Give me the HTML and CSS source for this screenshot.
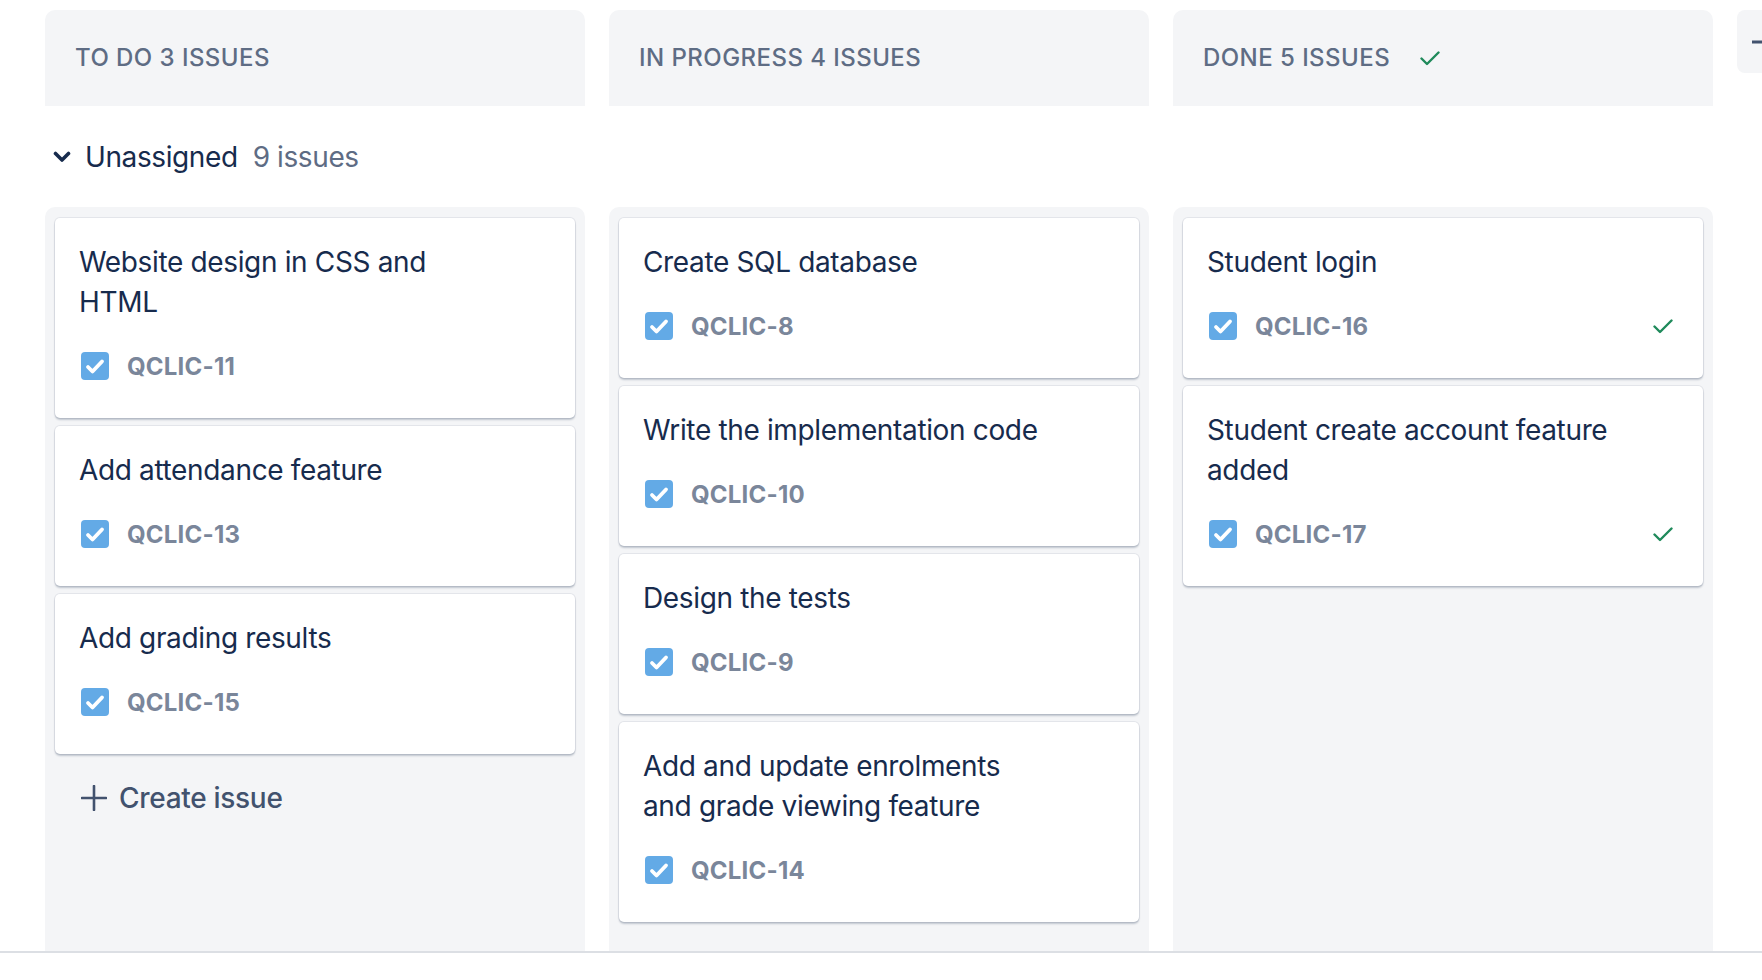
FILE: index.html
```html
<!DOCTYPE html>
<html lang="en">
<head>
<meta charset="utf-8">
<title>Board</title>
<link rel="stylesheet" href="styles.css">
</head>
<body>
<div class="board">
  <div class="col-head"><span class="col-title">TO DO 3 ISSUES</span></div>
  <div class="col-head"><span class="col-title">IN PROGRESS 4 ISSUES</span></div>
  <div class="col-head"><span class="col-title">DONE 5 ISSUES</span>
    <svg class="done-check head-check" viewBox="0 0 20 15" width="20" height="15"><path d="M1.5 7.5 L7 13 L18.5 1.5" fill="none" stroke="#1f8a5b" stroke-width="2.4" stroke-linecap="round" stroke-linejoin="round"/></svg>
  </div>
  <div class="add-col">
    <svg viewBox="0 0 34 34" width="34" height="34"><path d="M0 17 H34 M17 0 V34" stroke="#42526e" stroke-width="3" stroke-linecap="round"/></svg>
  </div>

  <div class="swimlane">
    <svg class="chev" viewBox="0 0 18 12" width="18" height="12"><path d="M2.5 2.5 L9 9 L15.5 2.5" fill="none" stroke="#172b4d" stroke-width="3.6" stroke-linecap="round" stroke-linejoin="round"/></svg>
    <span class="lane-title">Unassigned</span>
    <span class="lane-count">9 issues</span>
  </div>

  <div class="col-body">
    <div class="card">
      <div class="summary">Website design in CSS and HTML</div>
      <div class="meta">
        <svg class="task" viewBox="0 0 28 28" width="28" height="28"><rect width="28" height="28" rx="4" fill="#63aae6"/><path d="M7 15 L11.5 19.5 L21 9.5" fill="none" stroke="#fff" stroke-width="3.8" stroke-linecap="round" stroke-linejoin="round"/></svg>
        <span class="key">QCLIC-11</span>
      </div>
    </div>
    <div class="card">
      <div class="summary">Add attendance feature</div>
      <div class="meta">
        <svg class="task" viewBox="0 0 28 28" width="28" height="28"><rect width="28" height="28" rx="4" fill="#63aae6"/><path d="M7 15 L11.5 19.5 L21 9.5" fill="none" stroke="#fff" stroke-width="3.8" stroke-linecap="round" stroke-linejoin="round"/></svg>
        <span class="key">QCLIC-13</span>
      </div>
    </div>
    <div class="card">
      <div class="summary">Add grading results</div>
      <div class="meta">
        <svg class="task" viewBox="0 0 28 28" width="28" height="28"><rect width="28" height="28" rx="4" fill="#63aae6"/><path d="M7 15 L11.5 19.5 L21 9.5" fill="none" stroke="#fff" stroke-width="3.8" stroke-linecap="round" stroke-linejoin="round"/></svg>
        <span class="key">QCLIC-15</span>
      </div>
    </div>
    <div class="create">
      <svg viewBox="0 0 26 26" width="26" height="26"><path d="M1 13 H25 M13 1 V25" stroke="#42526e" stroke-width="2.6" stroke-linecap="round"/></svg>
      <span>Create issue</span>
    </div>
  </div>

  <div class="col-body">
    <div class="card">
      <div class="summary">Create SQL database</div>
      <div class="meta">
        <svg class="task" viewBox="0 0 28 28" width="28" height="28"><rect width="28" height="28" rx="4" fill="#63aae6"/><path d="M7 15 L11.5 19.5 L21 9.5" fill="none" stroke="#fff" stroke-width="3.8" stroke-linecap="round" stroke-linejoin="round"/></svg>
        <span class="key">QCLIC-8</span>
      </div>
    </div>
    <div class="card">
      <div class="summary">Write the implementation code</div>
      <div class="meta">
        <svg class="task" viewBox="0 0 28 28" width="28" height="28"><rect width="28" height="28" rx="4" fill="#63aae6"/><path d="M7 15 L11.5 19.5 L21 9.5" fill="none" stroke="#fff" stroke-width="3.8" stroke-linecap="round" stroke-linejoin="round"/></svg>
        <span class="key">QCLIC-10</span>
      </div>
    </div>
    <div class="card">
      <div class="summary">Design the tests</div>
      <div class="meta">
        <svg class="task" viewBox="0 0 28 28" width="28" height="28"><rect width="28" height="28" rx="4" fill="#63aae6"/><path d="M7 15 L11.5 19.5 L21 9.5" fill="none" stroke="#fff" stroke-width="3.8" stroke-linecap="round" stroke-linejoin="round"/></svg>
        <span class="key">QCLIC-9</span>
      </div>
    </div>
    <div class="card">
      <div class="summary">Add and update enrolments and grade viewing feature</div>
      <div class="meta">
        <svg class="task" viewBox="0 0 28 28" width="28" height="28"><rect width="28" height="28" rx="4" fill="#63aae6"/><path d="M7 15 L11.5 19.5 L21 9.5" fill="none" stroke="#fff" stroke-width="3.8" stroke-linecap="round" stroke-linejoin="round"/></svg>
        <span class="key">QCLIC-14</span>
      </div>
    </div>
  </div>

  <div class="col-body">
    <div class="card">
      <div class="summary">Student login</div>
      <div class="meta">
        <svg class="task" viewBox="0 0 28 28" width="28" height="28"><rect width="28" height="28" rx="4" fill="#63aae6"/><path d="M7 15 L11.5 19.5 L21 9.5" fill="none" stroke="#fff" stroke-width="3.8" stroke-linecap="round" stroke-linejoin="round"/></svg>
        <span class="key">QCLIC-16</span>
        <svg class="done-check card-check" viewBox="0 0 20 15" width="20" height="15"><path d="M1.5 7.5 L7 13 L18.5 1.5" fill="none" stroke="#1f8a5b" stroke-width="2.4" stroke-linecap="round" stroke-linejoin="round"/></svg>
      </div>
    </div>
    <div class="card">
      <div class="summary">Student create account feature added</div>
      <div class="meta">
        <svg class="task" viewBox="0 0 28 28" width="28" height="28"><rect width="28" height="28" rx="4" fill="#63aae6"/><path d="M7 15 L11.5 19.5 L21 9.5" fill="none" stroke="#fff" stroke-width="3.8" stroke-linecap="round" stroke-linejoin="round"/></svg>
        <span class="key">QCLIC-17</span>
        <svg class="done-check card-check" viewBox="0 0 20 15" width="20" height="15"><path d="M1.5 7.5 L7 13 L18.5 1.5" fill="none" stroke="#1f8a5b" stroke-width="2.4" stroke-linecap="round" stroke-linejoin="round"/></svg>
      </div>
    </div>
  </div>
</div>
</body>
</html>
```

FILE: styles.css
```css
html, body {
  margin: 0;
  padding: 0;
  background: #ffffff;
}

body {
  font-family: Inter, "Noto Sans", "Liberation Sans", sans-serif;
  color: #172b4d;
  overflow: hidden;
}

.board {
  box-sizing: border-box;
  height: 953px;
  padding: 10px 0 0 45px;
  border-bottom: 2px solid #dcdfe4;
  display: grid;
  grid-template-columns: 540px 540px 540px 64px;
  grid-template-rows: 96px 101px 1fr;
  column-gap: 24px;
  overflow: hidden;
}

.col-head {
  background: #f4f5f7;
  border-radius: 10px 10px 0 0;
  box-sizing: border-box;
  padding: 32px 30px 0 30px;
  display: flex;
  align-items: flex-start;
  gap: 30px;
}

.col-title {
  font-size: 24px;
  line-height: 32px;
  font-weight: 500;
  letter-spacing: 0.45px;
  color: #5e6c84;
  white-space: nowrap;
}

.head-check {
  margin-top: 9px;
}

.add-col {
  background: #f4f5f7;
  border-radius: 8px;
  height: 63px;
  display: flex;
  align-items: center;
  justify-content: center;
}

.swimlane {
  grid-column: 1 / -1;
  display: flex;
  align-items: center;
  padding-left: 8px;
}

.chev {
  margin-right: 14px;
}

.lane-title {
  font-size: 28px;
  line-height: 40px;
  letter-spacing: -0.4px;
  color: #172b4d;
  margin-right: 15px;
}

.lane-count {
  font-size: 28px;
  line-height: 40px;
  letter-spacing: -0.4px;
  color: #5e6c84;
}

.col-body {
  background: #f4f5f7;
  border-radius: 10px 10px 0 0;
  padding: 11px 10px 0 10px;
  display: flex;
  flex-direction: column;
  gap: 8px;
  min-height: 0;
}

.card {
  background: #ffffff;
  border-radius: 5px;
  box-shadow: 0 0 0 1px rgba(9, 30, 66, 0.07), 0 2px 2px rgba(9, 30, 66, 0.22);
  padding: 24px 24px 32px 24px;
}

.summary {
  font-size: 28px;
  line-height: 40px;
  letter-spacing: -0.35px;
  color: #172b4d;
  max-width: 410px;
}

.meta {
  margin-top: 24px;
  height: 40px;
  display: flex;
  align-items: center;
}

.task {
  margin-left: 2px;
  flex: none;
}

.key {
  margin-left: 18px;
  font-size: 24px;
  font-weight: 700;
  letter-spacing: 0.2px;
  color: #7a869a;
}

.card-check {
  margin-left: auto;
  margin-right: 6px;
}

.create {
  margin-top: 4px;
  height: 64px;
  display: flex;
  align-items: center;
  padding-left: 26px;
  gap: 12px;
  font-size: 28px;
  font-weight: 500;
  letter-spacing: -0.3px;
  color: #42526e;
}
```
